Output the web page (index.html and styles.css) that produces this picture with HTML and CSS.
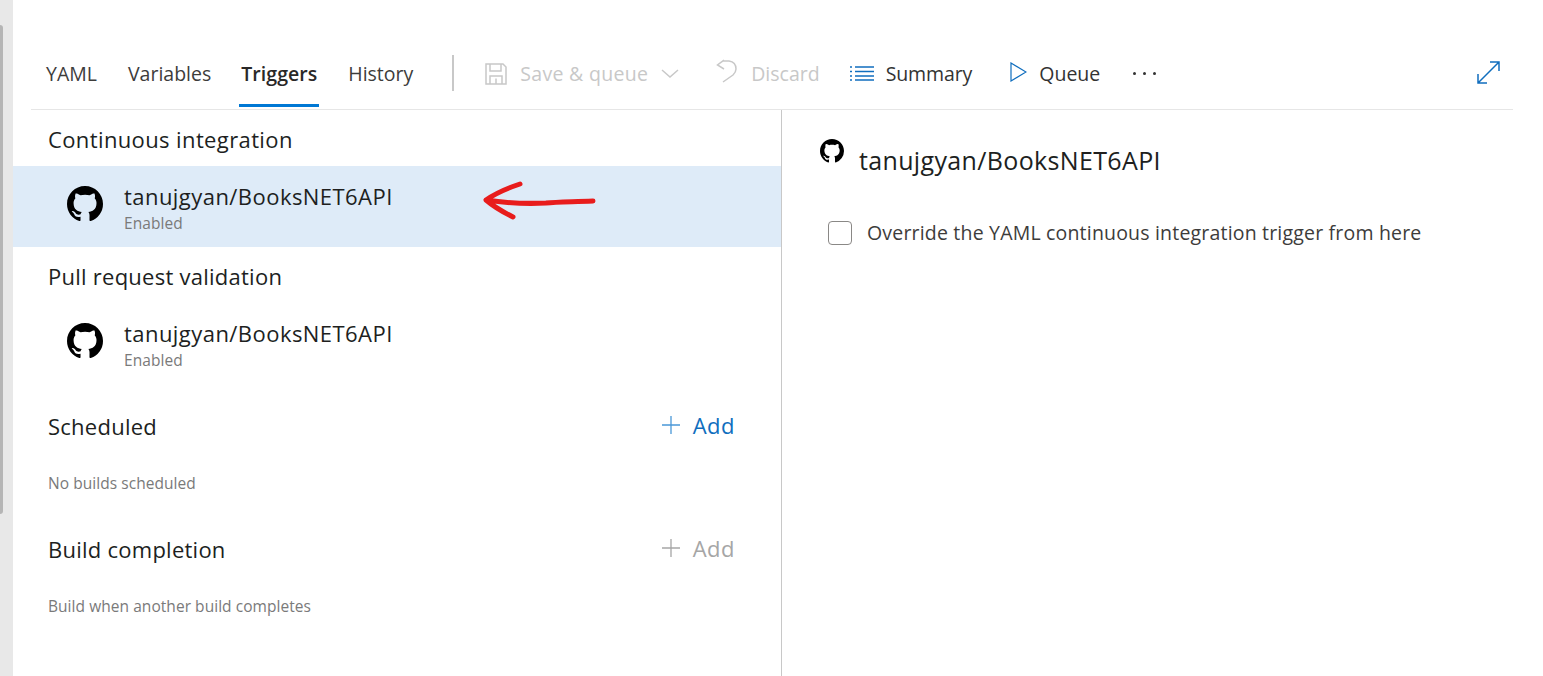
FILE: index.html
```html
<!DOCTYPE html>
<html lang="en">
<head>
    <meta charset="UTF-8">
    <title>Triggers</title>
    <link rel="stylesheet" href="styles.css">
</head>
<body>
    <svg class="defs" width="0" height="0">
        <symbol id="github" viewBox="0 0 16 16">
            <path d="M8 0C3.58 0 0 3.58 0 8c0 3.54 2.29 6.53 5.47 7.59.4.07.55-.17.55-.38 0-.19-.01-.82-.01-1.49-2.01.37-2.53-.49-2.69-.94-.09-.23-.48-.94-.82-1.13-.28-.15-.68-.52-.01-.53.63-.01 1.08.58 1.23.82.72 1.21 1.87.87 2.33.66.07-.52.28-.87.51-1.07-1.78-.2-3.64-.89-3.64-3.95 0-.87.31-1.59.82-2.15-.08-.2-.36-1.02.08-2.12 0 0 .67-.21 2.2.82.64-.18 1.32-.27 2-.27.68 0 1.36.09 2 .27 1.53-1.04 2.2-.82 2.2-.82.44 1.1.16 1.92.08 2.12.51.56.82 1.27.82 2.15 0 3.07-1.87 3.75-3.65 3.95.29.25.54.73.54 1.48 0 1.07-.01 1.93-.01 2.2 0 .21.15.46.55.38A8.013 8.013 0 0016 8c0-4.42-3.58-8-8-8z"/>
        </symbol>
    </svg>

    <div class="gutter"><div class="scrollbar"></div></div>

    <div class="main">
        <div class="toolbar">
            <a class="tab tab-yaml">YAML</a>
            <a class="tab tab-variables">Variables</a>
            <a class="tab tab-triggers active">Triggers</a>
            <a class="tab tab-history">History</a>
            <div class="separator"></div>

            <div class="action disabled save">
                <svg class="icon" width="22" height="22" viewBox="0 0 22 22">
                    <path d="M1 1h17l3 3v17H1z M5 1v7h11V1 M5 21v-8h12v8 M11 15.500v5.500"/>
                </svg>
                <span>Save &amp; queue</span>
                <svg class="chevron" width="18" height="9" viewBox="0 0 18 9"><path d="M1 1l8 7 8-7"/></svg>
            </div>
            <div class="action disabled discard">
                <svg class="icon" width="21" height="24" viewBox="0 0 21 24">
                    <path d="M8 1L1.500 6 8 10 M1.500 6L7 2h6q7 1 7 8 0 3-3 6L7 23"/>
                </svg>
                <span>Discard</span>
            </div>
            <div class="action summary">
                <svg class="icon" width="24" height="15" viewBox="0 0 24 15">
                    <path d="M5 1h19 M5 5.500h19 M5 10h19 M5 14h19"/>
                    <path d="M0 1h2 M0 5.500h2 M0 10h2 M0 14h2"/>
                </svg>
                <span>Summary</span>
            </div>
            <div class="action queue">
                <svg class="icon" width="17" height="20" viewBox="0 0 17 20"><path d="M1 1l15 9-15 9z"/></svg>
                <span>Queue</span>
            </div>
            <div class="more"><i></i><i></i><i></i></div>
            <svg class="expand" width="23" height="23" viewBox="0 0 23 23">
                <path d="M22 1L1 22 M13 1h9v9 M1 13v9h9"/>
            </svg>
        </div>

        <div class="panels">
            <div class="left">
                <h2 class="section-title first">Continuous integration</h2>
                <div class="repo selected">
                    <svg class="gh" width="36" height="36"><use href="#github"/></svg>
                    <div>
                        <div class="repo-name">tanujgyan/BooksNET6API</div>
                        <div class="repo-state">Enabled</div>
                    </div>
                </div>

                <h2 class="section-title">Pull request validation</h2>
                <div class="repo">
                    <svg class="gh" width="36" height="36"><use href="#github"/></svg>
                    <div>
                        <div class="repo-name">tanujgyan/BooksNET6API</div>
                        <div class="repo-state">Enabled</div>
                    </div>
                </div>

                <div class="section-head scheduled">
                    <h2>Scheduled</h2>
                    <a class="add"><svg width="18" height="18" viewBox="0 0 18 18"><path d="M9 0v18 M0 9h18"/></svg>Add</a>
                </div>
                <p class="hint">No builds scheduled</p>

                <div class="section-head completion">
                    <h2>Build completion</h2>
                    <a class="add off"><svg width="18" height="18" viewBox="0 0 18 18"><path d="M9 0v18 M0 9h18"/></svg>Add</a>
                </div>
                <p class="hint">Build when another build completes</p>

                <svg class="arrow" width="120" height="44" viewBox="0 0 120 44">
                    <path d="M40 4C28 8 16 13 6 20c7 6 17 12 27 17 M6 20c20 3 40 4 60 3 10-1 20-1 47-2"/>
                </svg>
            </div>

            <div class="right">
                <div class="right-title">
                    <svg width="24" height="24"><use href="#github"/></svg>
                    <span>tanujgyan/BooksNET6API</span>
                </div>
                <label class="override">
                    <span class="checkbox"></span>
                    Override the YAML continuous integration trigger from here
                </label>
            </div>
        </div>
    </div>
</body>
</html>
```

FILE: styles.css
```css
* {
    box-sizing: border-box;
}
html, body {
    height: 100%;
}
body {
    margin: 0;
    display: flex;
    height: 676px;
    overflow: hidden;
    background-color: #fff;
    color: #201f1e;
    font-family: "Open Sans", "Noto Sans", sans-serif;
}
.defs {
    position: absolute;
}
.gutter {
    width: 13px;
    flex-shrink: 0;
    background-color: #e8e8e8;
    padding-top: 25px;
}
.scrollbar {
    width: 3px;
    height: 489px;
    background-color: #b5b5b5;
    border-radius: 0 3px 3px 0;
}
.main {
    flex-grow: 1;
    min-width: 0;
}

/* top bar */
.toolbar {
    display: flex;
    align-items: center;
    height: 110px;
    margin: 0 30px 0 18px;
    padding-top: 38px;
    border-bottom: 1px solid #e6e6e6;
    font-size: 19.500px;
    position: relative;
}
.tab {
    color: #3d3c3b;
    height: 71px;
    display: flex;
    align-items: center;
    padding-bottom: 1px;
    position: relative;
}
.tab-yaml { margin-left: 15px; }
.tab-variables { margin-left: 31px; }
.tab-triggers { margin-left: 30px; font-weight: 600; color: #292827; letter-spacing: 0.05px; }
.tab-history { margin-left: 31px; }
.active::after {
    content: "";
    position: absolute;
    left: -2px;
    right: -2px;
    bottom: 2px;
    height: 3px;
    background-color: #0078d4;
}
.separator {
    width: 2px;
    height: 36px;
    margin: -2px 0 0 39px;
    background-color: #c8c8c8;
}
.action {
    display: flex;
    align-items: center;
    color: #333;
}
.icon, .chevron, .expand {
    fill: none;
    stroke-width: 1.500;
}
.disabled {
    color: #c8c8c8;
}
.disabled svg {
    stroke: #c8c8c8;
}
.save { margin-left: 31px; gap: 13px; letter-spacing: 0.3px; }
.discard { margin-left: 37px; gap: 14px; }
.discard svg { margin-top: -5px; }
.summary { margin-left: 30px; gap: 12px; letter-spacing: -0.1px; }
.queue { margin-left: 38px; gap: 12px; }
.queue svg { stroke-width: 1.200; margin-top: -3px; }
.summary svg, .queue svg, .expand {
    stroke: #106ebe;
}
.more {
    display: flex;
    gap: 7px;
    margin-left: 33px;
}
.more i {
    width: 3px;
    height: 3px;
    border-radius: 50%;
    background-color: #333;
}
.expand {
    margin-left: auto;
    margin-right: 13px;
    margin-top: -3px;
}

/* panels */
.panels {
    display: flex;
    height: 566px;
}
.left {
    width: 769px;
    flex-shrink: 0;
    border-right: 1px solid #c8c8c8;
    position: relative;
}
.section-title, .section-head h2 {
    margin: 0;
    font-size: 22px;
    font-weight: 400;
    letter-spacing: 0.25px;
    color: #201f1e;
}
.section-title {
    padding: 12px 0 10px 35px;
    line-height: 34px;
    height: 56px;
}
.section-title.first {
    letter-spacing: 0.38px;
}
.repo {
    display: flex;
    align-items: center;
    height: 81px;
    padding: 1px 0 0 54px;
    gap: 21px;
}
.selected {
    background-color: #deebf8;
}
.gh {
    flex-shrink: 0;
    margin-bottom: 7px;
}
.repo-name {
    font-size: 22px;
    line-height: 28px;
    letter-spacing: 0.45px;
}
.repo-state {
    font-size: 15.500px;
    line-height: 20px;
    margin-top: 3px;
    letter-spacing: 0.05px;
    color: #7a7a7a;
}
.section-head {
    display: flex;
    justify-content: space-between;
    align-items: center;
    padding: 0 46px 0 35px;
    height: 34px;
}
.scheduled {
    margin-top: 25px;
}
.completion {
    margin-top: 39px;
}
.add {
    display: flex;
    align-items: center;
    gap: 13px;
    padding-bottom: 2px;
    font-size: 22px;
    letter-spacing: 0.5px;
    color: #106ebe;
}
.add svg {
    fill: none;
    stroke: #4a98d8;
    stroke-width: 1.300;
}
.add.off {
    color: #a6a6a6;
}
.add.off svg {
    stroke: #a6a6a6;
}
.hint {
    margin: 30px 0 0 35px;
    font-size: 15.500px;
    line-height: 20px;
    letter-spacing: 0.05px;
    color: #7a7a7a;
}
.arrow {
    position: absolute;
    left: 467px;
    top: 70px;
    fill: none;
    stroke: #e81c1c;
    stroke-width: 5;
    stroke-linecap: round;
    stroke-linejoin: round;
}

/* right side */
.right {
    flex-grow: 1;
    padding: 28px 0 0 38px;
}
.right-title {
    display: flex;
    align-items: flex-start;
    gap: 15px;
    font-size: 25px;
    letter-spacing: 0.35px;
    line-height: 44px;
}
.right-title svg {
    margin-top: 1px;
}
.override {
    display: flex;
    align-items: center;
    gap: 15px;
    margin: 37px 0 0 8px;
    font-size: 19.500px;
    letter-spacing: 0.19px;
    color: #3d3c3b;
}
.checkbox {
    width: 24px;
    height: 24px;
    border: 1px solid #8a8886;
    border-radius: 4px;
}
```
